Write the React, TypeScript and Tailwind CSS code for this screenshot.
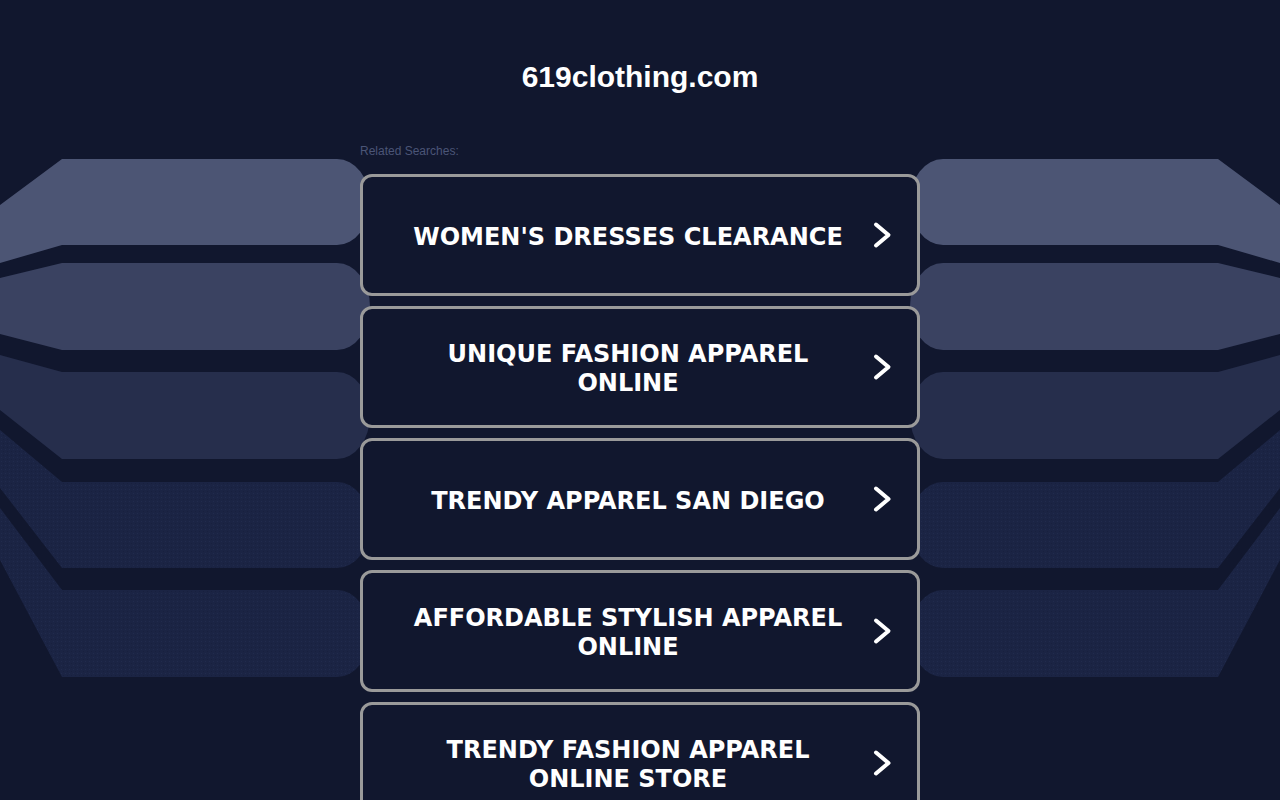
import React from "react";

const items = [
  "WOMEN'S DRESSES CLEARANCE",
  "UNIQUE FASHION APPAREL ONLINE",
  "TRENDY APPAREL SAN DIEGO",
  "AFFORDABLE STYLISH APPAREL ONLINE",
  "TRENDY FASHION APPAREL ONLINE STORE",
];

const bands = [
  { y1: 159, y2: 245, lt: 205, lb: 263, fill: "#4c5574" },
  { y1: 263, y2: 350, lt: 278, lb: 334, fill: "#3a4261" },
  { y1: 372, y2: 459, lt: 355, lb: 410, fill: "#262e4c" },
  { y1: 482, y2: 568, lt: 430, lb: 488, fill: "url(#dots)" },
  { y1: 590, y2: 677, lt: 508, lb: 560, fill: "url(#dots)" },
];

function Background() {
  return (
    <svg
      className="[grid-area:1/1] self-start w-full h-[800px]"
      viewBox="0 0 1280 800"
      preserveAspectRatio="none"
    >
      <defs>
        <pattern id="dots" width="4" height="4" patternUnits="userSpaceOnUse">
          <rect width="4" height="4" fill="#1b2444" />
          <rect x="1" y="1" width="1" height="1" fill="#212b4d" />
          <rect x="3" y="3" width="1" height="1" fill="#18203e" />
        </pattern>
      </defs>
      {bands.map((b, i) => {
        const ry = (b.y2 - b.y1) / 2;
        const left = `M0,${b.lt} L62,${b.y1} L337,${b.y1} A33,${ry} 0 0 1 337,${b.y2} L62,${b.y2} L0,${b.lb} Z`;
        const right = `M1280,${b.lt} L1218,${b.y1} L943,${b.y1} A33,${ry} 0 0 0 943,${b.y2} L1218,${b.y2} L1280,${b.lb} Z`;
        return (
          <g key={i} fill={b.fill}>
            <path d={left} />
            <path d={right} />
          </g>
        );
      })}
    </svg>
  );
}

function Chevron() {
  return (
    <svg width="20" height="28" viewBox="0 0 20 28" className="shrink-0">
      <polyline
        points="4,3.5 16.5,14 4,24.5"
        fill="none"
        stroke="#ffffff"
        strokeWidth="4"
        strokeLinecap="round"
        strokeLinejoin="round"
      />
    </svg>
  );
}

export default function App() {
  return (
    <div className="min-h-screen bg-[#11172e] grid overflow-hidden">
      <Background />
      <div className="[grid-area:1/1] flex flex-col items-center">
        <h1
          className="mt-[59px] h-[36px] leading-[36px] text-[30px] font-bold text-white"
          style={{ fontFamily: '"Liberation Sans", Arial, sans-serif' }}
        >
          619clothing.com
        </h1>
        <div className="w-[560px] mt-[49px]">
          <p
            className="text-[12px] leading-[14px] text-[#4b5577]"
            style={{ fontFamily: '"Liberation Sans", Arial, sans-serif' }}
          >
            Related Searches:
          </p>
          <div className="mt-[16px] flex flex-col gap-[10px]">
            {items.map((t) => (
              <a
                key={t}
                href="#"
                className="h-[122px] rounded-[12px] border-[3px] border-[#9a9a9a] bg-[#11172e] flex items-center pl-[33px] pr-[25px] gap-[12px]"
              >
                <span
                  className="flex-1 text-center text-white font-bold text-[24px] leading-[29px] pt-[4px]"
                  style={{ fontFamily: '"DejaVu Sans", Verdana, sans-serif' }}
                >
                  {t}
                </span>
                <Chevron />
              </a>
            ))}
          </div>
        </div>
      </div>
    </div>
  );
}
